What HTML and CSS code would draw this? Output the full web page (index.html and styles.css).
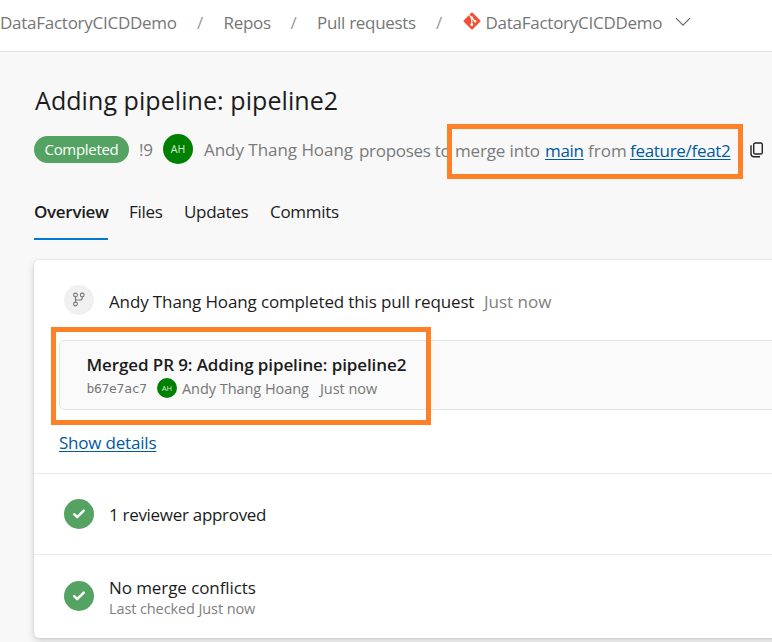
FILE: index.html
```html
<!DOCTYPE html>
<html lang="en">
<head>
<meta charset="utf-8">
<title>Adding pipeline: pipeline2</title>
<link rel="stylesheet" href="styles.css">
</head>
<body>
<nav class="crumbs">
  <span class="crumb-project">DataFactoryCICDDemo</span>
  <span class="slash">/</span>
  <span class="crumb-repos">Repos</span>
  <span class="slash">/</span>
  <span class="crumb-prs">Pull requests</span>
  <span class="slash">/</span>
  <svg class="git" width="18" height="18" viewBox="0 0 18 18"><rect x="2.7" y="2.7" width="12.6" height="12.6" rx="1" fill="#f05133" transform="rotate(45 9 9)"/><path d="M6.2 3.2 8.8 5.8V12.5M8.8 6l3 3" fill="none" stroke="#fff" stroke-width="1.1"/><circle cx="8.8" cy="5.9" r="1.3" fill="#fff"/><circle cx="8.8" cy="12.7" r="1.4" fill="#fff"/><circle cx="12.1" cy="9.2" r="1.3" fill="#fff"/></svg>
  <span class="crumb-repo">DataFactoryCICDDemo</span>
  <svg class="chevron" width="16" height="10" viewBox="0 0 16 10"><path d="M1 1.2l7 7 7-7" fill="none" stroke="#666" stroke-width="1.2"/></svg>
</nav>
<main>
  <h1>Adding pipeline: pipeline2</h1>
  <div class="meta">
    <span class="badge">Completed</span>
    <span class="pr-id">!9</span>
    <span class="avatar">AH</span>
    <span class="author">Andy Thang Hoang</span>
    <span class="proposes">proposes to</span>
    <div class="branches">
      <span class="merge">merge into</span>
      <a class="main-link">main</a>
      <span class="from">from</span>
      <a class="feat-link">feature/feat2</a>
    </div>
    <svg class="copy" width="14" height="16" viewBox="0 0 14 16"><rect x="3.7" y="1" width="8.6" height="11" rx="1.6" fill="none" stroke="#222" stroke-width="1.4"/><path d="M1 3.2v8.5q0 3 3 3h6" fill="none" stroke="#222" stroke-width="1.4"/></svg>
  </div>
  <div class="tabs">
    <span class="tab active">Overview</span>
    <span class="tab files">Files</span>
    <span class="tab updates">Updates</span>
    <span class="tab commits">Commits</span>
  </div>
  <section class="card">
    <div class="summary">
      <div class="status">
        <span class="circle"><svg width="14" height="16" viewBox="0 0 14 16"><g fill="none" stroke="#777" stroke-width="1.1"><circle cx="3.5" cy="3" r="1.9"/><circle cx="10.2" cy="3" r="1.9"/><circle cx="3.5" cy="12" r="1.9"/><path d="M3.5 5v5M10.2 5v1q0 2-2 2H3.5"/></g></svg></span>
        <span class="status-text">Andy Thang Hoang completed this pull request</span>
        <span class="status-time">Just now</span>
      </div>
      <div class="commit">
        <div class="commit-title">Merged PR 9: Adding pipeline: pipeline2</div>
        <div class="commit-meta">
          <span class="hash">b67e7ac7</span>
          <span class="avatar small">AH</span>
          <span class="commit-author">Andy Thang Hoang</span>
          <span class="commit-time">Just now</span>
        </div>
      </div>
      <a class="details">Show details</a>
    </div>
    <div class="check-row">
      <span class="circle ok"><svg width="14" height="12" viewBox="0 0 14 12"><path d="M2.2 6.2l3 3 6.6-6.6" fill="none" stroke="#fff" stroke-width="2.4" stroke-linecap="round" stroke-linejoin="round"/></svg></span>
      <span class="approved">1 reviewer approved</span>
    </div>
    <div class="check-row last">
      <span class="circle ok"><svg width="14" height="12" viewBox="0 0 14 12"><path d="M2.2 6.2l3 3 6.6-6.6" fill="none" stroke="#fff" stroke-width="2.4" stroke-linecap="round" stroke-linejoin="round"/></svg></span>
      <div class="conflicts">
        <div class="conflict-title">No merge conflicts</div>
        <div class="conflict-time">Last checked Just now</div>
      </div>
    </div>
    <div class="highlight commit-highlight"></div>
  </section>
</main>
</body>
</html>
```

FILE: styles.css
```css
* { box-sizing: border-box; }
body {
  margin: 0;
  height: 642px;
  overflow: hidden;
  background: #f8f8f8;
  color: #1c1c1c;
  font: 17px/24px "Open Sans", "Noto Sans", sans-serif;
  letter-spacing: -0.3px;
  white-space: nowrap;
}
span, a, svg { flex: none; display: block; }
a { color: #005a9e; text-decoration: underline; text-decoration-thickness: 1px; text-underline-offset: 2px; }

.crumbs {
  display: flex;
  align-items: center;
  height: 52px;
  padding-bottom: 6px;
  background: #fff;
  border-bottom: 1px solid #e3e3e3;
  color: #767676;
}
.crumb-project { width: 197px; letter-spacing: -0.26px; }
.slash { width: 26.5px; color: #999; }
.crumb-repos { width: 67px; }
.crumb-prs { width: 119px; }
.crumbs .git { margin-bottom: 4px; margin-right: 5px; }
.crumb-repo { width: 189px; letter-spacing: -0.26px; }
.chevron { margin-bottom: 2px; }

main { padding: 30px 0 0 34px; }
h1 { margin: 0; padding-left: 1px; font-size: 25px; font-weight: 400; line-height: 36px; letter-spacing: 0.07px; }
.meta { display: flex; align-items: center; height: 55px; margin-top: 6px; color: #7a7a7a; }
.badge {
  width: 95px;
  height: 27px;
  margin-top: -4px;
  border-radius: 14px;
  background: #55a362;
  color: #fff;
  font-size: 15px;
  font-weight: 500;
  line-height: 27px;
  text-align: center;
}
.pr-id { width: 24px; margin: -4px 0 0 10px; }
.avatar {
  width: 30px;
  height: 30px;
  margin-top: -5px;
  border-radius: 50%;
  background: #008000;
  color: #d8efd8;
  font-size: 10.5px;
  line-height: 30px;
  letter-spacing: 0;
  text-align: center;
}
.author { width: 155px; margin: -4px 0 0 11px; letter-spacing: -0.04px; }
.proposes { width: 88px; margin-top: -2px; }
.branches {
  position: relative;
  display: flex;
  align-items: center;
  width: 296px;
  height: 55px;
  padding: 0 0 2px 3px;
  border: 5px solid #ff8127;
}
.merge { width: 90px; letter-spacing: -0.15px; }
.main-link { width: 43px; }
.from { width: 42px; letter-spacing: 0; }
.copy { margin: -4px 0 0 7px; }

.tabs { display: flex; gap: 21px; height: 41px; margin-top: 20px; }
.tab { height: 41px; line-height: 26px; }
.active { width: 74px; border-bottom: 2px solid #0078d4; font-weight: 600; }
.files { width: 34px; }
.updates { width: 65px; }

.card {
  position: relative;
  width: 760px;
  height: 378px;
  margin-top: 20px;
  border-radius: 5px;
  background: #fff;
  box-shadow: 0 3px 7px rgba(0, 0, 0, .16), 0 0 2px rgba(0, 0, 0, .14);
}
.summary { height: 214px; padding: 25px 0 0 25px; border-bottom: 1px solid #eaeaea; }
.status { display: flex; align-items: center; height: 30px; padding-left: 5px; }
.circle { display: grid; place-items: center; width: 30px; height: 30px; border-radius: 50%; background: #f0f0f0; }
.status-text { width: 375px; margin: 3px 0 0 15px; letter-spacing: -0.13px; }
.status-time { margin-top: 3px; color: #808080; letter-spacing: 0; }
.commit {
  height: 70px;
  margin-top: 25px;
  padding: 12px 0 0 26.5px;
  border: 1px solid #e3e3e3;
  border-radius: 5px;
  background: #fafafa;
}
.commit-title { font-weight: 600; line-height: 24px; letter-spacing: -0.1px; }
.commit-meta { display: flex; align-items: center; height: 24px; color: #767676; font-size: 14.5px; letter-spacing: -0.05px; }
.hash { width: 70.5px; font: 13px/24px "DejaVu Sans Mono", monospace; letter-spacing: -0.3px; }
.avatar.small { width: 20px; height: 20px; margin: -2px 5px 0 0; font-size: 7.5px; line-height: 20px; }
.commit-author { width: 138px; }
.details { width: 98px; margin-top: 21px; letter-spacing: -0.2px; }
.check-row { display: flex; align-items: center; height: 81px; padding-left: 30px; border-bottom: 1px solid #eaeaea; }
.last { height: 83px; border: 0; }
.last .circle { margin-top: -1px; }
.circle.ok { background: #55a362; }
.approved, .conflicts { margin-left: 15px; }
.approved { margin-top: 2px; }
.conflict-title { line-height: 23px; letter-spacing: -0.08px; }
.conflict-time { font-size: 14.5px; line-height: 19px; color: #808080; letter-spacing: -0.1px; }

.highlight { border: 5px solid #ff8127; }
.commit-highlight { position: absolute; left: 17px; top: 67px; width: 380px; height: 98px; }
```
